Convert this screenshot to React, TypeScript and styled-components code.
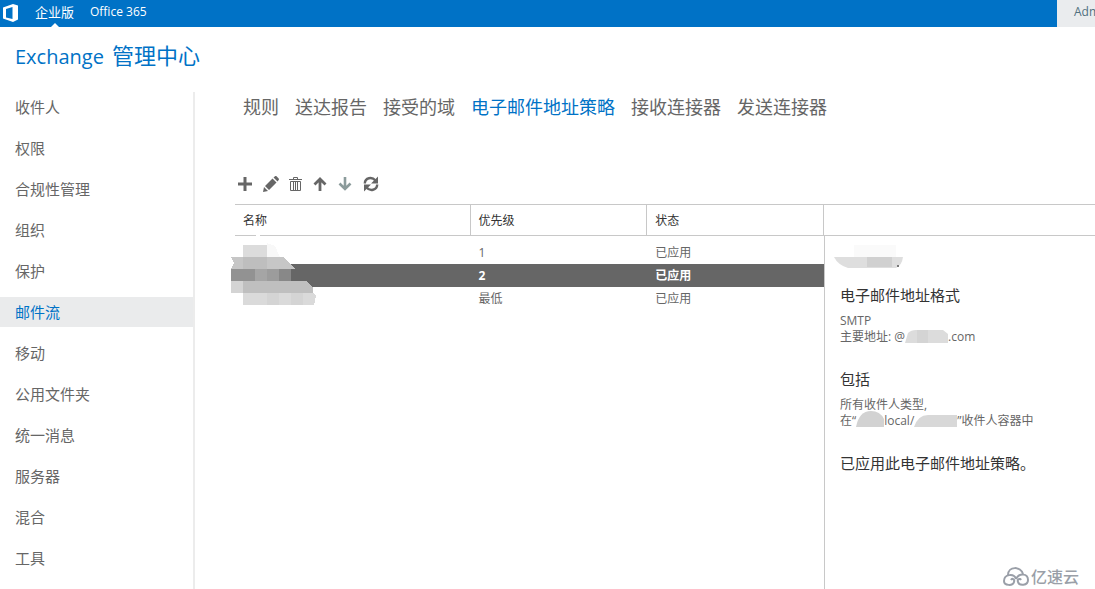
import React from "react";
import styled, { createGlobalStyle } from "styled-components";

const GlobalStyle = createGlobalStyle`
  * { box-sizing: border-box; }
  body {
    margin: 0;
    background: #fff;
    color: #666;
    font-family: "Open Sans", "Noto Sans CJK SC", sans-serif;
    font-size: 12px;
  }
  a { color: inherit; text-decoration: none; }
  button { font: inherit; color: inherit; border: 0; padding: 0; background: none; }
  ul { list-style: none; margin: 0; padding: 0; }
`;

const Page = styled.div`
  position: relative;
  min-height: 100vh;
  display: flex;
  flex-direction: column;
  overflow: hidden;
`;

const TopBar = styled.header`
  display: flex;
  height: 27px;
  background: #0072c6;
  color: #fff;
`;

const Logo = styled.svg`
  width: 16px;
  height: 18px;
  margin: 4px 16px 0 3px;
`;

const TopLink = styled.a<{ $current?: boolean }>`
  position: relative;
  margin-right: 16px;
  font-size: ${(p) => (p.$current ? 13 : 12)}px;
  line-height: 24px;
  &::after {
    content: "";
    display: ${(p) => (p.$current ? "block" : "none")};
    position: absolute;
    left: 50%;
    bottom: 0;
    margin-left: -4px;
    border: 4px solid transparent;
    border-top: 0;
    border-bottom-color: #fff;
  }
`;

const Account = styled.button`
  width: 38px;
  margin-left: auto;
  padding-left: 17px;
  overflow: hidden;
  background: #eaecee;
  color: #50707f;
  line-height: 24px;
  text-align: left;
  display: flex;
`;

const Title = styled.h1`
  display: flex;
  align-items: baseline;
  gap: 8px;
  height: 65px;
  margin: 0;
  padding: 12px 15px 0;
  color: #0072c6;
  font-size: 22px;
  font-weight: 400;
  line-height: 32px;
`;

const TitleLatin = styled.span`
  font-size: 20px;
`;

const Body = styled.div`
  flex: 1;
  display: flex;
`;

const Sidebar = styled.nav`
  flex: 0 0 195px;
  border-right: 2px solid #ececec;
`;

const NavItem = styled.li`
  margin-bottom: 11px;
`;

const NavLink = styled.a<{ $current: boolean }>`
  display: block;
  padding-left: 15px;
  font-size: 15px;
  line-height: 30px;
  background: ${(p) => (p.$current ? "#eaebec" : "transparent")};
  color: ${(p) => (p.$current ? "#0072c6" : "#666")};
`;

const Main = styled.main`
  flex: 1;
  min-width: 0;
  display: flex;
  flex-direction: column;
  padding-left: 40px;
`;

const Tabs = styled.nav`
  display: flex;
  gap: 16px;
  padding-left: 8px;
  font-size: 18px;
  line-height: 30px;
  white-space: nowrap;
`;

const Tab = styled.a<{ $current: boolean }>`
  color: ${(p) => (p.$current ? "#0072c6" : "#666")};
`;

const Toolbar = styled.div`
  display: flex;
  margin: 50px 0 8px -2px;
`;

const Tool = styled.button<{ $muted?: boolean }>`
  display: flex;
  align-items: center;
  justify-content: flex-start;
  padding-left: 4px;
  width: 25px;
  height: 24px;
  color: ${(p) => (p.$muted ? "#8b9b9b" : "#666")};
`;

const Content = styled.div`
  flex: 1;
  display: grid;
  grid-template-columns: 589fr 271fr;
`;

const ListPane = styled.section`
  position: relative;
`;

const Table = styled.table`
  width: 100%;
  table-layout: fixed;
  border-collapse: separate;
  border-spacing: 0;
  text-align: left;
`;

const HeadCell = styled.th<{ $width: string }>`
  width: ${(p) => p.$width};
  height: 32px;
  padding: 0 8px;
  border: solid #c8c8c8;
  border-width: 1px 1px 1px 0;
  color: #333;
  font-weight: 400;
`;

const Rows = styled.tbody`
  &::before {
    content: "";
    display: table-row;
    height: 5px;
  }
`;

const Row = styled.tr<{ $selected: boolean }>`
  background: ${(p) => (p.$selected ? "#666" : "transparent")};
  color: ${(p) => (p.$selected ? "#fff" : "#666")};
  font-weight: ${(p) => (p.$selected ? 700 : 400)};
`;

const Cell = styled.td`
  height: 23px;
  padding: 0 9px 0 8px;
  line-height: 16px;
`;

const NameMosaic = styled.svg`
  position: absolute;
  left: -4px;
  top: 28px;
  width: 90px;
  height: 76px;
`;

const DetailPane = styled.aside`
  display: flex;
  flex-direction: column;
`;

const DetailHead = styled.div`
  height: 32px;
  border: solid #c8c8c8;
  border-width: 1px 0;
`;

const DetailBody = styled.div`
  flex: 1;
  padding: 7px 0 0 15px;
  border-left: 1px solid #c8c8c8;
  white-space: nowrap;
`;

const DetailHeading = styled.h2`
  margin: 0 0 8px;
  color: #333;
  font-size: 15px;
  font-weight: 400;
  line-height: 20px;
`;

const DetailText = styled.p`
  margin: 0 0 24px;
  line-height: 16px;
`;

const DetailName = styled.svg`
  display: block;
  width: 70px;
  height: 28px;
  margin: 0 0 14px -6px;
`;

const Smudge = styled.svg<{ $width: number }>`
  width: ${(p) => p.$width}px;
  height: 14px;
  margin: -2px 0;
  vertical-align: -1px;
`;

const Watermark = styled.div`
  position: absolute;
  right: 16px;
  bottom: 2px;
  display: flex;
  align-items: center;
  gap: 2px;
  color: #9a9fa8;
  font-size: 16px;
  font-weight: 500;
  line-height: 20px;
`;

const navItems = [
  "收件人", "权限", "合规性管理", "组织", "保护", "邮件流",
  "移动", "公用文件夹", "统一消息", "服务器", "混合", "工具",
];

const tabs = ["规则", "送达报告", "接受的域", "电子邮件地址策略", "接收连接器", "发送连接器"];

const columns = [
  { label: "名称", width: "40%" },
  { label: "优先级", width: "30%" },
  { label: "状态", width: "30%" },
];

const policies = [
  { priority: "1", status: "已应用" },
  { priority: "2", status: "已应用", selected: true },
  { priority: "最低", status: "已应用" },
];

const tools = [
  {
    label: "新建",
    icon: <path d="M8 1v14M1 8h14" stroke="currentColor" strokeWidth="3" />,
  },
  {
    label: "编辑",
    icon: (
      <g fill="currentColor" transform="translate(1 0)">
        <path d="M0 16l1-5 4 4zM2 10l7.500-7.500 4 4L6 14zM10.500 1.500L12 0.300c.5-.4 1-.4 1.500 0l2.200 2.200c.4.500.4 1 0 1.500L14.500 5.500z" />
      </g>
    ),
  },
  {
    label: "删除",
    icon: (
      <g stroke="currentColor" fill="none">
        <path d="M2 3.500h13M6.500 3V1.500h4V3" />
        <path d="M3.500 5.500h10v9h-10zM6.500 6v8M8.500 6v8M10.500 6v8" />
      </g>
    ),
  },
  {
    label: "上移",
    icon: <path d="M8 15V3M2.500 8.500L8 3l5.500 5.500" stroke="currentColor" strokeWidth="2.800" fill="none" />,
  },
  {
    label: "下移",
    muted: true,
    icon: <path d="M8 1v12M2.500 7.500L8 13l5.500-5.500" stroke="currentColor" strokeWidth="2.600" fill="none" />,
  },
  {
    label: "刷新",
    icon: (
      <g transform="translate(1 0)">
        <path d="M1.800 7.500C2 1.500 9 .5 12.500 4.500M14.200 8.500C14 14.500 7 15.500 3.500 11.500" stroke="currentColor" strokeWidth="2.400" fill="none" />
        <path d="M15 .5v7H8zM1 15.500v-7h7z" fill="currentColor" />
      </g>
    ),
  },
];

export default function App() {
  return (
    <Page>
      <GlobalStyle />
      <TopBar>
        <Logo viewBox="0 0 16 18" aria-hidden="true">
          <path fill="#fff" fillRule="evenodd" d="M0 3.500L10 0l5 1.500v14L10 18 0 14.500zM3 5v8.500L9.500 15V3z" />
        </Logo>
        <TopLink href="#enterprise" $current>企业版</TopLink>
        <TopLink href="#office365">Office 365</TopLink>
        <Account type="button">Adm</Account>
      </TopBar>
      <Title>
        <TitleLatin>Exchange</TitleLatin>
        <span>管理中心</span>
      </Title>
      <Body>
        <Sidebar>
          <ul>
            {navItems.map((item) => (
              <NavItem key={item}>
                <NavLink href="#nav" $current={item === "邮件流"}>{item}</NavLink>
              </NavItem>
            ))}
          </ul>
        </Sidebar>
        <Main>
          <Tabs>
            {tabs.map((tab) => (
              <Tab key={tab} href="#tab" $current={tab === "电子邮件地址策略"}>{tab}</Tab>
            ))}
          </Tabs>
          <Toolbar>
            {tools.map((tool) => (
              <Tool key={tool.label} type="button" aria-label={tool.label} $muted={tool.muted}>
                <svg width="16" height="16" viewBox="0 0 16 16" overflow="visible">{tool.icon}</svg>
              </Tool>
            ))}
          </Toolbar>
          <Content>
            <ListPane>
              <Table>
                <thead>
                  <tr>
                    {columns.map((c) => (
                      <HeadCell key={c.label} $width={c.width}>{c.label}</HeadCell>
                    ))}
                  </tr>
                </thead>
                <Rows>
                  {policies.map((p) => (
                    <Row key={p.priority} $selected={!!p.selected}>
                      <Cell />
                      <Cell>{p.priority}</Cell>
                      <Cell>{p.status}</Cell>
                    </Row>
                  ))}
                </Rows>
              </Table>
              <NameMosaic viewBox="0 0 90 76" shapeRendering="crispEdges" aria-hidden="true">
                <path d="M24 4l3-2 3 2z" fill="#fff" />
                <path d="M36 11l8 3 5 11H36z" fill="#f8f8f8" />
                <path d="M12 13h24v12H12z" fill="#dcdcdc" />
                <path d="M0 25h53l11 12H0l3-6z" fill="#c6c6c6" />
                <path d="M12 25h24v12H12z" fill="#bebebe" />
                <path d="M0 37h60v12H0z" fill="#929292" />
                <path d="M24 37h12v12H24z" fill="#a5a5a5" />
                <path d="M36 37h12v12H36z" fill="#9c9c9c" />
                <path d="M48 37h12v12H48z" fill="#888" />
                <path d="M0 49h76l6 7v5H0z" fill="#bfbfbf" />
                <path d="M0 49h12v12H0z" fill="#d4d4d4" />
                <path d="M12 61h70l3 3-2 9H12z" fill="#dadada" />
                <path d="M36 61h12v12H36zM60 61h12v12H60z" fill="#d4d4d4" />
              </NameMosaic>
            </ListPane>
            <DetailPane>
              <DetailHead />
              <DetailBody>
                <DetailName viewBox="0 0 70 28" aria-hidden="true">
                  <path d="M20 2h42v12H20z" fill="#fafafa" />
                  <path d="M0 14h69q-1 8-7 11H14Q4 22 0 14z" fill="#dedede" />
                  <path d="M33 14h25v10H33z" fill="#d0d0d0" />
                  <path d="M63 22h2v2h-2z" fill="#777" />
                </DetailName>
                <DetailHeading>电子邮件地址格式</DetailHeading>
                <DetailText>
                  SMTP<br />
                  主要地址: @
                  <Smudge $width={43} viewBox="0 0 43 14" aria-hidden="true">
                    <path d="M0 13L3 3q3-3 8-3h27l5 4v9z" fill="#dcdcdc" />
                    <path d="M12 0h11v13H12z" fill="#d4d4d4" />
                  </Smudge>
                  .com
                </DetailText>
                <DetailHeading>包括</DetailHeading>
                <DetailText>
                  所有收件人类型,<br />
                  在“
                  <Smudge $width={28} viewBox="0 0 28 14" overflow="visible" aria-hidden="true">
                    <path d="M0 13Q3-3 15-3q9 0 13 8v8z" fill="#d2d2d2" />
                  </Smudge>
                  local/
                  <Smudge $width={43} viewBox="0 0 43 14" aria-hidden="true">
                    <path d="M0 13Q4 1 14 1h29v12z" fill="#d8d8d8" />
                  </Smudge>
                  ”收件人容器中
                </DetailText>
                <DetailHeading>已应用此电子邮件地址策略。</DetailHeading>
              </DetailBody>
            </DetailPane>
          </Content>
        </Main>
      </Body>
      <Watermark>
        <svg width="26" height="20" viewBox="0 0 26 20" fill="none" stroke="currentColor" strokeWidth="2" aria-hidden="true">
          <path d="M5 8C5-1 18-1 20 7" />
          <path d="M8 13c1-2 4-1 3 2-1 4-10 4-10-1 0-7 10-8 12-2" />
          <path d="M18 13c-1-2-4-1-3 2 1 4 10 4 10-2 0-7-9-7-12-1" />
        </svg>
        <span>亿速云</span>
      </Watermark>
    </Page>
  );
}
